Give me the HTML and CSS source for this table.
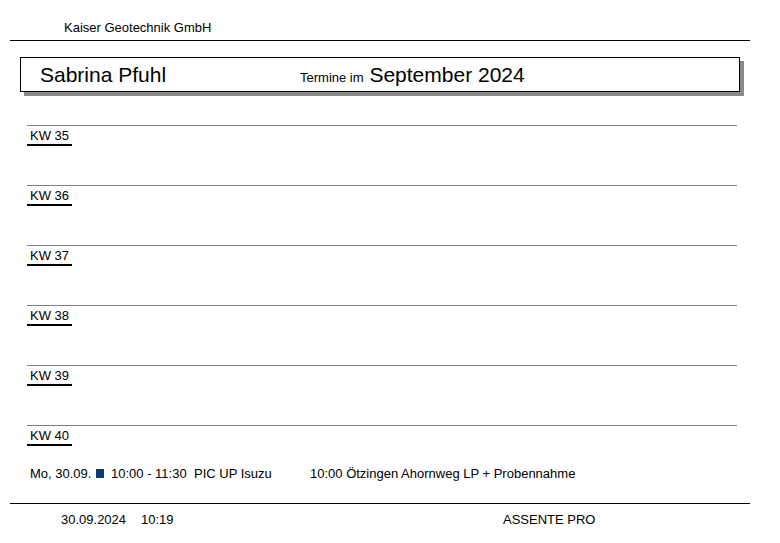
FILE: index.html
```html
<!DOCTYPE html>
<html lang="de">
<head>
<meta charset="utf-8">
<title>Termine September 2024</title>
<link rel="stylesheet" href="styles.css">
</head>
<body>
<div class="page">
  <div class="company">Kaiser Geotechnik GmbH</div>
  <div class="rule"></div>
  <div class="titlebox">
    <span class="name">Sabrina Pfuhl</span>
    <span class="month"><span class="small">Termine im</span> September 2024</span>
  </div>
  <div class="weeks">
    <div class="week"><span class="kw">KW 35</span></div>
    <div class="week"><span class="kw">KW 36</span></div>
    <div class="week"><span class="kw">KW 37</span></div>
    <div class="week"><span class="kw">KW 38</span></div>
    <div class="week"><span class="kw">KW 39</span></div>
    <div class="week last">
      <span class="kw">KW 40</span>
      <div class="entry">
        <span class="day">Mo, 30.09.</span>
        <span class="mark"></span>
        <span class="time">10:00 - 11:30</span>
        <span class="subject">PIC UP Isuzu</span>
        <span class="desc">10:00 Ötzingen Ahornweg LP + Probennahme</span>
      </div>
    </div>
  </div>
  <div class="rule footrule"></div>
  <div class="footer">
    <span class="date">30.09.2024</span>
    <span class="clock">10:19</span>
    <span class="app">ASSENTE PRO</span>
  </div>
</div>
</body>
</html>
```
FILE: styles.css
```css
html, body {
  margin: 0;
  padding: 0;
  background: #fff;
}
body {
  font-family: "Liberation Sans", Arial, sans-serif;
  color: #000;
  width: 780px;
  height: 543px;
  overflow: hidden;
}
.page {
  display: flex;
  flex-direction: column;
}
.company {
  font-size: 13px;
  line-height: 15px;
  padding: 20px 0 0 64px;
  height: 20px;
}
.rule {
  margin: 0 30px 0 10px;
  border-top: 1px solid #000;
}
.titlebox {
  margin: 16px 0 0 20px;
  width: 718px;
  height: 33px;
  border: 1px solid #000;
  box-shadow: 4px 4px 0 #8a8a8a;
  display: flex;
  align-items: center;
  font-size: 21px;
}
.name {
  padding-left: 19px;
  width: 260px;
}
.month .small {
  font-size: 13px;
}
.weeks {
  margin: 33px 0 0 27px;
  width: 710px;
  display: flex;
  flex-direction: column;
}
.week {
  border-top: 1px solid #808080;
  height: 59px;
  display: flex;
  flex-direction: column;
  align-items: flex-start;
}
.week.last {
  height: 77px;
}
.kw {
  font-size: 13px;
  line-height: 15px;
  padding: 2px 3px 1px 3px;
  border-bottom: 2px solid #000;
}
.entry {
  margin-top: 20px;
  display: flex;
  align-items: center;
  font-size: 13px;
  line-height: 15px;
  padding-left: 3px;
}
.day {
  width: 66px;
}
.mark {
  width: 8px;
  height: 9px;
  background: #0b3b70;
  margin-right: 7px;
}
.time {
  width: 83px;
}
.subject {
  width: 116px;
}
.footer {
  display: flex;
  font-size: 13px;
  line-height: 15px;
  padding: 8px 0 0 61px;
}
.date {
  width: 80px;
}
.clock {
  width: 362px;
}
```
